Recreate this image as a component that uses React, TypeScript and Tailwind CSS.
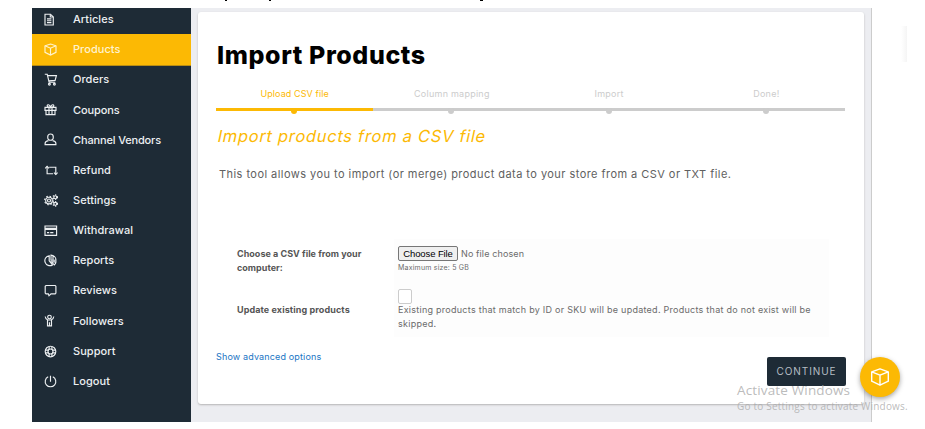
import type { ReactNode } from 'react';

type MenuItem = {
  label: string;
  spacing: string;
  icon: ReactNode;
};

const box = (
  <>
    <path d="M6.5 1 12 2.8v6.5L6.5 12 1 9.3V2.8z" />
    <path d="M1 2.8l5.5 2.4L12 2.8M6.5 5.2V12" />
  </>
);

const menu: MenuItem[] = [
  {
    label: 'Articles',
    spacing: 'tracking-[0.05px]',
    icon: (
      <>
        <path d="M1 1.2h5.5L9.3 4v8H1z" />
        <path d="M6.3 1.2V4h3M3 5.8h4.4M3 7.7h4.4M3 9.6h4.4" />
      </>
    ),
  },
  { label: 'Products', spacing: 'tracking-[0.05px]', icon: box },
  {
    label: 'Orders',
    spacing: 'tracking-[0.05px]',
    icon: (
      <>
        <path d="M.8 1.2h2.4l1.9 8h6.2M3.7 2.6h8.7l-1.3 4.8-6.4.5" />
        <circle cx="5.4" cy="11.2" r=".9" />
        <circle cx="10.4" cy="11.2" r=".9" />
      </>
    ),
  },
  {
    label: 'Coupons',
    spacing: 'tracking-[-0.1px]',
    icon: (
      <>
        <path d="M1 4.4h11v3H1zM2 7.4v4.2h9V7.4M5 4.4v7.2M8 4.4v7.2" />
        <path d="M6.5 4.2C5.5 1 3 1.3 3.2 3c.1.8.8 1.3 3.3 1.2C9 4.3 9.7 3.8 9.8 3c.2-1.7-2.3-2-3.3 1.2z" />
      </>
    ),
  },
  {
    label: 'Channel Vendors',
    spacing: 'tracking-[-0.15px]',
    icon: (
      <>
        <path d="M6.5 1c1.8 0 2.8 1.2 2.8 2.9S8.2 7.2 6.5 7.2 3.7 5.6 3.7 3.9 4.7 1 6.5 1z" />
        <path d="M4.4 7.6C2.2 8 1.100 9 1.100 10.500v1.100h10.800v-1.100c0-1.500-1.100-2.500-3.300-2.900" />
      </>
    ),
  },
  {
    label: 'Refund',
    spacing: 'tracking-[0.05px]',
    icon: (
      <>
        <path d="M5.2 3.2h6.6v7.2M9 9.7H3.1V2.5" />
        <path d="M1.2 4.3l1.9-1.9L5 4.3M9.9 8.6l1.9 1.9 1.9-1.9" />
      </>
    ),
  },
  {
    label: 'Settings',
    spacing: 'tracking-[0.05px]',
    icon: (
      <>
        <circle cx="5" cy="6.5" r="3.3" />
        <circle cx="5" cy="6.5" r="1.5" />
        <circle cx="5" cy="6.5" r="4.3" strokeDasharray="1.6 1.78" />
        <circle cx="11.3" cy="3.2" r="1.5" />
        <circle cx="11.3" cy="3.2" r="2.3" strokeDasharray="1 1.4" />
        <circle cx="11.3" cy="9.8" r="1.5" />
        <circle cx="11.3" cy="9.8" r="2.3" strokeDasharray="1 1.4" />
      </>
    ),
  },
  {
    label: 'Withdrawal',
    spacing: 'tracking-[0.05px]',
    icon: <path d="M1 2h11.6v9.3H1zM1 4.2h11.6M1 5.3h11.6M3 8.6h2.2M6.2 8.6h3.2" />,
  },
  {
    label: 'Reports',
    spacing: 'tracking-[0.05px]',
    icon: (
      <>
        <path d="M5.2 1.7a5 5 0 1 0 3.3 9.2L5.2 6.8z" />
        <path d="M7 1.1a5.2 5.2 0 0 1 5 5.1H7zM7.2 7.8H12a5 5 0 0 1-1.6 3.1zM9 1.8v4.1" />
      </>
    ),
  },
  {
    label: 'Reviews',
    spacing: 'tracking-[0.05px]',
    icon: <path d="M2 1.5h9.2l.7.7v6.9l-.7.7H7l-2 2-.7-2H2l-.8-.7V2.2z" />,
  },
  {
    label: 'Followers',
    spacing: 'tracking-[0.05px]',
    icon: (
      <>
        <circle cx="5.5" cy="3" r="1.8" />
        <path d="M1.2 2.5c.2 1.7 1 2.6 2.3 3.3v6.1h4V5.8c1.3-.7 2.1-1.6 2.3-3.3M5.5 8.2v3.7M3.5 6h4" />
      </>
    ),
  },
  {
    label: 'Support',
    spacing: 'tracking-[0.05px]',
    icon: (
      <>
        <circle cx="6.5" cy="6.5" r="5.3" />
        <circle cx="6.5" cy="6.5" r="2.5" />
        <path d="M5.1 1.5v3M7.9 1.5v3M5.1 8.5v3M7.9 8.5v3M1.5 5.1h3M1.5 7.9h3M8.5 5.1h3M8.5 7.9h3" />
      </>
    ),
  },
  {
    label: 'Logout',
    spacing: 'tracking-[0.05px]',
    icon: <path d="M4.2 1.7a5.3 5.3 0 1 0 4.6 0M6.5.8v5.9" />,
  },
];

const steps = ['Upload CSV file', 'Column mapping', 'Import', 'Done!'];

const Sidebar = () => {
  return (
    <nav className="w-[159px] shrink-0 overflow-hidden bg-[#1e2b36]">
      <ul className="-mt-[3.8px]">
        {menu.map((item) => {
          const active = item.label === 'Products';
          return (
            <li
              key={item.label}
              className={`flex h-[30.16px] items-center pl-3 text-[11px] font-medium ${
                active
                  ? 'bg-[#fcb904] text-[#fff3cf] shadow-[0_1px_0_#b98d14]'
                  : 'text-[#edf0f2]'
              }`}
            >
              <svg
                viewBox="0 0 14 13"
                className="h-[13px] w-[14px] shrink-0"
                fill="none"
                stroke="currentColor"
                strokeWidth="1.15"
              >
                {item.icon}
              </svg>
              <span className={`ml-[15px] whitespace-nowrap ${item.spacing}`}>{item.label}</span>
            </li>
          );
        })}
      </ul>
    </nav>
  );
};

const Steps = () => {
  return (
    <ol className="mt-[15px] ml-[18px] grid w-[629px] grid-cols-4 text-center text-[9px]">
      {steps.map((step, i) => (
        <li
          key={step}
          className={`relative h-[26px] border-b-3 leading-[18px] ${
            i === 0
              ? 'border-[#fcb904] tracking-[0.1px] text-[#fcb904]'
              : 'border-[#ccc] tracking-[0.25px] text-[#ccc]'
          }`}
        >
          {step}
          <span
            className={`absolute -bottom-[6px] left-[75px] size-[6px] rounded-full ${
              i === 0 ? 'bg-[#fcb904]' : 'bg-[#ccc]'
            }`}
          />
        </li>
      ))}
    </ol>
  );
};

const ImportForm = () => {
  return (
    <div className="mt-[56px] ml-[29px] grid w-[602px] grid-cols-[167px_435px] text-[9px] leading-[14px] text-[#6b6b6b]">
      <div className="pl-[10px] font-bold text-[#555]">
        <p className="mt-[8px] w-[135px] tracking-[0.03px]">
          Choose a CSV file from your computer:
        </p>
        <p className="mt-[28px] tracking-[0.1px]">Update existing products</p>
      </div>
      <div className="h-[98px] bg-[#fdfdfd] pl-[4px]">
        <div className="flex items-center pt-[7px]">
          <button
            type="button"
            className="h-[15px] w-[60px] rounded-[2px] border border-[#767676] bg-[#efefef] font-['Liberation_Sans',sans-serif] text-[9.5px] leading-[12px] tracking-[-0.1px] whitespace-nowrap text-black"
          >
            Choose File
          </button>
          <span className="ml-[3px] tracking-[0.13px]">No file chosen</span>
        </div>
        <p className="text-[7px] tracking-[0.2px]">Maximum size: 5 GB</p>
        <span className="mt-[14px] block h-[15px] w-[14px] rounded-[2px] border border-[#ccc] bg-white" />
        <p className="-mt-px w-[425px] tracking-[0.26px]">
          Existing products that match by ID or SKU will be updated. Products that do not exist will be skipped.
        </p>
      </div>
    </div>
  );
};

export default function App() {
  return (
    <div className="relative h-[429px] w-[925px] overflow-hidden bg-white pt-2 pl-8 font-['Inter','Liberation_Sans',sans-serif]">
      {/* descenders of the line above the panel */}
      <span className="absolute top-0 left-[225px] h-px w-[2px] bg-black" />
      <span className="absolute top-0 left-[269px] h-px w-[2px] bg-black" />
      <span className="absolute top-0 left-[480px] h-px w-[3px] bg-black" />

      <div className="flex h-[414px] w-[840px]">
        <Sidebar />
        <main className="flex-1 border-r border-[#ccc] bg-[#ecedf1] pt-1 pl-[7px]">
          <section className="flex h-[392px] w-[666px] flex-col rounded-[3px] bg-white shadow-[0_1px_2px_#b5b5b5]">
            <h1 className="mt-[28px] ml-[19px] text-[25px] leading-[30px] font-extrabold tracking-[0.6px] text-black">
              Import Products
            </h1>
            <Steps />
            <h2 className="mt-[15px] ml-[20px] text-[16.5px] leading-[20px] tracking-[0.7px] text-[#fcb904]">
              <span className="inline-block -skew-x-12">Import products from a CSV file</span>
            </h2>
            <p className="mt-[19px] ml-[21px] text-[11px] leading-[18px] tracking-[0.45px] text-[#606060]">
              This tool allows you to import (or merge) product data to your store from a CSV or TXT file.
            </p>
            <ImportForm />
            <div className="flex justify-between pr-[18px] pl-[18px]">
              <a href="#" className="mt-[13px] text-[9px] leading-[14px] tracking-[0.15px] text-[#1a75c4]">
                Show advanced options
              </a>
              <button
                type="button"
                className="mt-[20px] h-[29px] w-[79px] rounded-[2px] bg-[#1e2b36] text-[10px] tracking-[0.9px] text-[#b5bdc3]"
              >
                CONTINUE
              </button>
            </div>
          </section>
        </main>
      </div>

      <div className="absolute top-[26px] left-[901px] h-[36px] w-[6px] bg-linear-to-r from-white to-[#f5f5f5]" />

      <div className="absolute top-[357px] left-[860px] flex size-10 items-center justify-center rounded-full bg-[#fcb904] text-white shadow-[0_2px_5px_rgba(0,0,0,0.35)]">
        <svg
          viewBox="0 0 20 20"
          className="size-5"
          fill="none"
          stroke="currentColor"
          strokeWidth="1.4"
          strokeLinejoin="round"
        >
          <path d="M10 1.8l8.3 3.1v9.3L10 18.2l-8.3-4V4.9zM1.7 4.9L10 8.2l8.3-3.3M10 8.2v10" />
        </svg>
      </div>

      <div className="absolute top-[382px] left-[737px] font-['Open_Sans','Noto_Sans',sans-serif] whitespace-nowrap text-[#aaa]/80">
        <p className="text-[13.5px] leading-[17px] tracking-[0.15px]">Activate Windows</p>
        <p className="text-[10px] leading-[15px] tracking-[0.2px]">Go to Settings to activate Windows.</p>
      </div>
    </div>
  );
}
